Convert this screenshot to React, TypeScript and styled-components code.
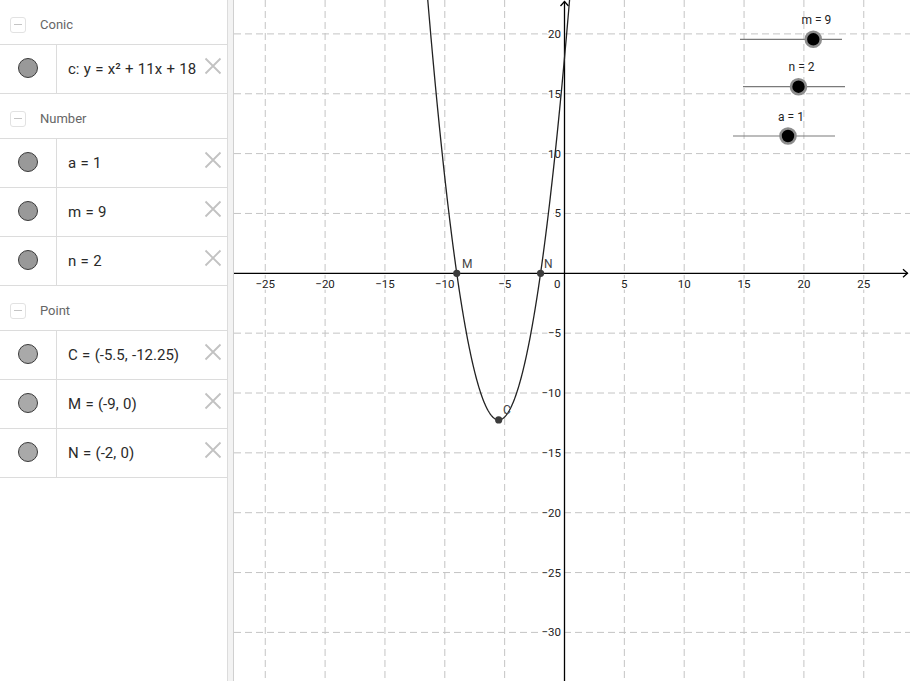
import React from "react";
import styled, { createGlobalStyle } from "styled-components";

const Global = createGlobalStyle`
  html, body { margin: 0; padding: 0; background: #fff; }
  body { font-family: Roboto, "Liberation Sans", sans-serif; }
  #root { width: 910px; height: 681px; overflow: hidden; }
  *, *::before, *::after { box-sizing: border-box; }
`;

const Page = styled.div`
  display: flex;
  width: 910px;
  height: 681px;
  overflow: hidden;
`;

const Panel = styled.div`
  width: 228px;
  flex: none;
  border-right: 1px solid #dcdcdc;
  display: flex;
  flex-direction: column;
  background: #fff;
`;

const Splitter = styled.div`
  width: 6px;
  flex: none;
  background: #f3f3f3;
  border-right: 1px solid #d0d0d0;
`;

const GraphArea = styled.div`
  flex: 1;
  position: relative;
  background: #fff;
`;

const Header = styled.div`
  height: 45px;
  flex: none;
  padding-top: 5px;
  padding-left: 10px;
  border-bottom: 1px solid #dcdcdc;
  display: flex;
  align-items: center;
  gap: 14px;
  font-size: 13px;
  color: #666;
`;

const Collapse = styled.div`
  width: 16px;
  height: 16px;
  border: 1px solid #e2e2e2;
  border-radius: 3px;
  display: flex;
  align-items: center;
  justify-content: center;
  &::after {
    content: "";
    width: 8px;
    height: 1.5px;
    background: #c4c4c4;
  }
`;

const Row = styled.div`
  height: 49px;
  flex: none;
  border-bottom: 1px solid #dcdcdc;
  display: flex;
`;

const ToggleCell = styled.div`
  width: 57px;
  flex: none;
  border-right: 1px solid #dcdcdc;
  display: flex;
  align-items: center;
  justify-content: center;
  padding-bottom: 2px;
`;

const Dot = styled.div<{ $light?: boolean }>`
  width: 20px;
  height: 20px;
  border-radius: 50%;
  border: 1px solid #3a3a3a;
  background: ${(p) => (p.$light ? "#a9a9a9" : "#999999")};
`;

const ValueCell = styled.div`
  flex: 1;
  display: flex;
  align-items: center;
  padding-left: 11px;
  padding-right: 5px;
  font-size: 15px;
  word-spacing: 0.6px;
  color: #2a2a2a;
  white-space: pre;
`;

const Value = styled.span`
  flex: 1;
  padding-bottom: 1px;
`;

const CloseBox = styled.div`
  display: flex;
  margin-bottom: 6px;
`;

const Close = () => (
  <CloseBox>
    <svg width="18" height="18" viewBox="0 0 18 18">
      <path d="M1.5 1.5 L16.5 16.5 M16.5 1.5 L1.5 16.5" stroke="#c2c2c2" strokeWidth="1.8" />
    </svg>
  </CloseBox>
);

type Item = { text: React.ReactNode; light?: boolean };
type Section = { title: string; items: Item[] };

const sections: Section[] = [
  { title: "Conic", items: [{ text: "c: y = x² + 11x + 18" }] },
  { title: "Number", items: [{ text: "a = 1" }, { text: "m = 9" }, { text: "n = 2" }] },
  {
    title: "Point",
    items: [
      { text: "C = (-5.5, -12.25)", light: true },
      { text: "M = (-9, 0)", light: true },
      { text: "N = (-2, 0)", light: true },
    ],
  },
];

// graph geometry (svg coordinates, graph area starts at page x=234)
const OFF = 234;
const OX = 564.5 - OFF;
const OY = 273.3;
const S = 11.97;
const W = 910 - OFF;
const H = 681;

const px = (x: number) => OX + x * S;
const py = (y: number) => OY - y * S;

const f = (x: number) => x * x + 11 * x + 18;

const parabola = (() => {
  const pts: string[] = [];
  for (let x = -11.6; x <= 0.6; x += 0.05) {
    pts.push(`${px(x).toFixed(2)},${py(f(x)).toFixed(2)}`);
  }
  return "M" + pts.join(" L");
})();

const xs = [-25, -20, -15, -10, -5, 5, 10, 15, 20, 25];
const ys = [20, 15, 10, 5, -5, -10, -15, -20, -25, -30];
const fmt = (n: number) => (n < 0 ? "\u2212" + Math.abs(n) : String(n));

type Slider = { label: string; x1: number; x2: number; y: number; k: number };
const sliders: Slider[] = [
  { label: "m = 9", x1: 740, x2: 842, y: 39.3, k: 813.3 },
  { label: "n = 2", x1: 743, x2: 845, y: 86.7, k: 798.5 },
  { label: "a = 1", x1: 733, x2: 835, y: 136, k: 788 },
];

const FONT = "Roboto, 'Liberation Sans', sans-serif";

const Graph = () => (
  <svg width={W} height={H} viewBox={`0 0 ${W} ${H}`} style={{ display: "block" }}>
    <g stroke="#c4c4c4" strokeWidth="1" strokeDasharray="7 4">
      {xs.map((x) => (
        <line key={"gx" + x} x1={px(x)} y1={0} x2={px(x)} y2={H} />
      ))}
      {ys.map((y) => (
        <line key={"gy" + y} x1={0} y1={py(y)} x2={W} y2={py(y)} />
      ))}
    </g>
    <g fontFamily={FONT} fontSize="11.5" fill="#222" stroke="#fff" strokeWidth="3" style={{ paintOrder: "stroke" }}>
      {xs.map((x) => (
        <text key={"lx" + x} x={px(x)} y={OY + 14.5} textAnchor="middle">
          {fmt(x)}
        </text>
      ))}
      {ys.map((y) => (
        <text key={"ly" + y} x={OX - 3.5} y={py(y) + 4} textAnchor="end">
          {fmt(y)}
        </text>
      ))}
      <text x={OX - 4} y={OY + 14.5} textAnchor="end">0</text>
    </g>
    <g stroke="#000" strokeWidth="1.3" fill="none">
      <line x1={0} y1={OY} x2={W - 2} y2={OY} />
      <line x1={OX} y1={H} x2={OX} y2={1.5} />
      <path d={`M${W - 7} ${OY - 4} L${W - 2.5} ${OY} L${W - 7} ${OY + 4}`} />
      <path d={`M${OX - 4} 6 L${OX} 1.5 L${OX + 4} 6`} />
    </g>
    <path d={parabola} stroke="#222" strokeWidth="1.3" fill="none" />
    <g fill="#3c3c3c">
      <circle cx={px(-9)} cy={py(0)} r={3.6} />
      <circle cx={px(-2)} cy={py(0)} r={3.6} />
      <circle cx={px(-5.5)} cy={py(-12.25)} r={3.6} />
    </g>
    <g fontFamily={FONT} fontSize="12" fill="#444">
      <text x={462 - OFF} y={268}>M</text>
      <text x={544 - OFF} y={268}>N</text>
      <text x={503 - OFF} y={414}>C</text>
    </g>
    {sliders.map((s) => (
      <g key={s.label}>
        <line x1={s.x1 - OFF} y1={s.y} x2={s.x2 - OFF} y2={s.y} stroke="#7a7a7a" strokeWidth="1.2" />
        <circle cx={s.k - OFF} cy={s.y} r={7.5} fill="#000" stroke="#8d8d8d" strokeWidth="2.6" />
        <text x={s.k + 3 - OFF} y={s.y - 15.5} textAnchor="middle" fontFamily={FONT} fontSize="12" fill="#222">
          {s.label}
        </text>
      </g>
    ))}
  </svg>
);

export default function App() {
  return (
    <>
      <Global />
      <Page>
        <Panel>
          {sections.map((sec) => (
            <React.Fragment key={sec.title}>
              <Header>
                <Collapse />
                <span>{sec.title}</span>
              </Header>
              {sec.items.map((it, i) => (
                <Row key={i}>
                  <ToggleCell>
                    <Dot $light={it.light} />
                  </ToggleCell>
                  <ValueCell>
                    <Value>{it.text}</Value>
                    <Close />
                  </ValueCell>
                </Row>
              ))}
            </React.Fragment>
          ))}
        </Panel>
        <Splitter />
        <GraphArea>
          <Graph />
        </GraphArea>
      </Page>
    </>
  );
}
